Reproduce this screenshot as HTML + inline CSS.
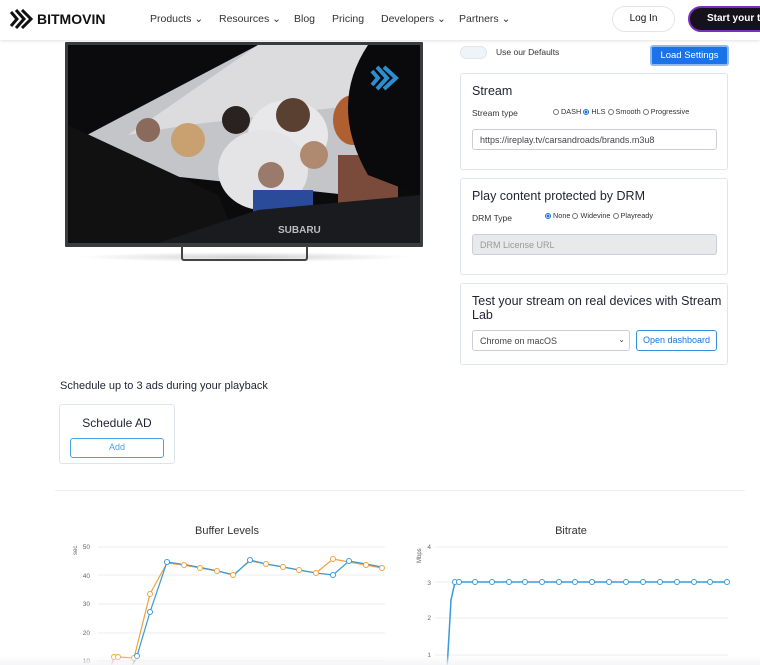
<!DOCTYPE html>
<html><head><meta charset="utf-8"><style>
*{box-sizing:border-box;margin:0;padding:0}
body{width:760px;height:665px;overflow:hidden;background:#fff;font-family:"Liberation Sans",sans-serif;color:#1f2233;position:relative}
.nav{position:absolute;top:0;left:0;width:760px;height:40px;background:#fff;box-shadow:0 1px 3px rgba(0,0,0,.12);z-index:5}
.nav span{position:absolute;top:13px;font-size:10.5px;color:#333}
.abs{position:absolute}
.card{position:absolute;border:1px solid #dfe4ec;border-radius:3px;background:#fff}
.h{position:absolute;font-size:12.5px;color:#1f2233}
.lbl{position:absolute;font-size:8.5px;color:#333}
.radio{position:absolute;font-size:7.3px;color:#333}
.radio i{display:inline-block;width:6px;height:6px;border:1px solid #777;border-radius:50%;margin-right:2px;vertical-align:-1px}
.radio i.on{border-color:#1a73e8;background:radial-gradient(#1a73e8 45%,#fff 55%)}
.inp{position:absolute;border:1px solid #ccd;border-radius:3px;font-size:9px;color:#444;padding:6px 7px}
</style></head><body>
<div class="nav">
  <svg class="abs" style="left:10px;top:9px" width="24" height="20" viewBox="0 0 24 20"><path d="M1 3l6 7-6 7M6 1l8 9-8 9M12 1l9 9-9 9" fill="none" stroke="#111" stroke-width="3"/></svg>
  <div class="abs" style="left:37px;top:11px;font-size:14px;font-weight:bold;color:#111">BITMOVIN</div>
  <span style="left:150px">Products ⌄</span><span style="left:219px">Resources ⌄</span><span style="left:294px">Blog</span><span style="left:332px">Pricing</span><span style="left:381px">Developers ⌄</span><span style="left:459px">Partners ⌄</span>
  <div class="abs" style="left:612px;top:6px;width:63px;height:26px;border:1px solid #e4e6ee;border-radius:14px;font-size:10px;text-align:center;line-height:24px;color:#111">Log In</div>
  <div class="abs" style="left:688px;top:6px;width:90px;height:26px;border:2px solid #7b2fbf;border-radius:14px;background:#15121c;color:#fff;font-size:10px;font-weight:bold;line-height:22px;padding-left:17px;white-space:nowrap">Start your tri</div>
</div>

<!-- TV -->
<div class="abs" style="left:65px;top:42px;width:358px;height:205px;background:#3a3c3e;border-radius:1px"></div>
<div class="abs" style="left:68px;top:45px;width:352px;height:198px;overflow:hidden;background:#0b0b0d">
  <svg width="352" height="198" viewBox="0 0 352 198">
    <polygon points="190,0 300,0 300,80 280,150 0,120 0,100" fill="#c3c5c8"/>
    <polygon points="190,0 300,0 290,60 120,80 60,90" fill="#dcdcde"/>
    <ellipse cx="220" cy="90" rx="40" ry="35" fill="#e8e8ea"/>
    <ellipse cx="195" cy="125" rx="45" ry="40" fill="#e4e4e6"/>
    <circle cx="168" cy="75" r="14" fill="#2a2220"/>
    <circle cx="225" cy="70" r="17" fill="#5a4030"/>
    <circle cx="120" cy="95" r="17" fill="#c9a070"/>
    <circle cx="80" cy="85" r="12" fill="#8a6a5a"/>
    <circle cx="246" cy="110" r="14" fill="#b08a70"/>
    <circle cx="203" cy="130" r="13" fill="#9a7a6a"/>
    <rect x="185" y="145" width="60" height="35" fill="#2a4a9a"/>
    <rect x="0" y="130" width="80" height="60" fill="#6a3030"/>
    <rect x="270" y="110" width="60" height="60" fill="#7a4a3a"/>
    <ellipse cx="285" cy="75" rx="20" ry="25" fill="#b06030"/>
    <polygon points="0,80 150,150 170,198 0,198" fill="#111"/>
    <polygon points="90,198 190,165 352,150 352,198" fill="#1a1b1e"/>
    <path d="M300 0 Q260 60 300 130 L352 150 L352 0Z" fill="#0a0a0c"/>
    <text x="210" y="188" fill="#bbb" font-size="10" font-weight="bold" font-family="Liberation Sans">SUBARU</text>
    <path d="M304 26l6 7-6 7M309 22l10 11-10 11M316 22l12 11-12 11" fill="none" stroke="#2a8fd0" stroke-width="4"/>
  </svg>
</div>
<div class="abs" style="left:75px;top:252px;width:340px;height:10px;border-radius:50%;background:radial-gradient(ellipse,rgba(0,0,0,.18),rgba(0,0,0,0) 70%)"></div>
<div class="abs" style="left:181px;top:246px;width:127px;height:15px;border:2px solid #444;border-top:none;border-radius:0 0 3px 3px"></div>

<!-- right panel -->
<div class="abs" style="left:460px;top:46px;width:27px;height:13px;border:1px solid #dfe6ee;border-radius:7px;background:#eef4f8"></div>
<div class="lbl" style="left:496px;top:47px">Use our Defaults</div>
<div class="abs" style="left:650px;top:45px;width:79px;height:21px;background:#1a73e8;border:2px solid #8fb8f0;border-radius:3px;color:#fff;font-size:9.5px;text-align:center;line-height:17px">Load Settings</div>

<div class="card" style="left:460px;top:73px;width:268px;height:97px"></div>
<div class="h" style="left:472px;top:84px">Stream</div>
<div class="lbl" style="left:472px;top:108px">Stream type</div>
<div class="radio" style="left:553px;top:107px"><i></i>DASH <i class="on"></i>HLS <i></i>Smooth <i></i>Progressive</div>
<div class="inp" style="left:472px;top:129px;width:245px;height:21px;padding-top:5px">https://ireplay.tv/carsandroads/brands.m3u8</div>

<div class="card" style="left:460px;top:178px;width:268px;height:97px"></div>
<div class="h" style="left:472px;top:189px">Play content protected by DRM</div>
<div class="lbl" style="left:472px;top:213px">DRM Type</div>
<div class="radio" style="left:545px;top:211px"><i class="on"></i>None <i></i>Widevine <i></i>Playready</div>
<div class="inp" style="left:472px;top:234px;width:245px;height:21px;padding-top:5px;background:#e8e9ea;color:#999">DRM License URL</div>

<div class="card" style="left:460px;top:283px;width:268px;height:82px"></div>
<div class="h" style="left:472px;top:294px;line-height:14px;width:250px">Test your stream on real devices with Stream Lab</div>
<div class="inp" style="left:472px;top:330px;width:158px;height:21px;padding-top:5px">Chrome on macOS<span style="position:absolute;right:4px;top:4px;font-size:8px">⌄</span></div>
<div class="abs" style="left:636px;top:330px;width:81px;height:21px;border:1px solid #3a8ee0;border-radius:3px;color:#1a73e8;font-size:9px;text-align:center;line-height:19px">Open dashboard</div>

<!-- ads -->
<div class="abs" style="left:60px;top:380px;font-size:11px">Schedule up to 3 ads during your playback</div>
<div class="card" style="left:59px;top:404px;width:116px;height:60px"></div>
<div class="abs" style="left:59px;top:416px;width:116px;text-align:center;font-size:12px">Schedule AD</div>
<div class="abs" style="left:70px;top:438px;width:94px;height:20px;border:1.5px solid #4aa3e0;border-radius:3px;color:#4aa3e0;font-size:9px;text-align:center;line-height:17px">Add</div>
<div class="abs" style="left:55px;top:490px;width:690px;height:1px;background:#eceef2"></div>

<!-- charts -->
<svg class="abs" style="left:0;top:515px" width="760" height="150" viewBox="0 515 760 150" font-family="Liberation Sans">
  <text x="227" y="534" font-size="11" text-anchor="middle" fill="#333">Buffer Levels</text>
  <text x="571" y="534" font-size="11" text-anchor="middle" fill="#333">Bitrate</text>
  <g stroke="#eee" stroke-width="1">
    <line x1="98" y1="547" x2="385" y2="547"/><line x1="98" y1="575" x2="385" y2="575"/><line x1="98" y1="604" x2="385" y2="604"/><line x1="98" y1="633" x2="385" y2="633"/><line x1="98" y1="661" x2="385" y2="661"/>
    <line x1="435" y1="547" x2="728" y2="547"/><line x1="435" y1="582" x2="728" y2="582"/><line x1="435" y1="618" x2="728" y2="618"/><line x1="435" y1="655" x2="728" y2="655"/>
  </g>
  <g font-size="6.5" fill="#666" text-anchor="end">
    <text x="90" y="549">50</text><text x="90" y="578">40</text><text x="90" y="606">30</text><text x="90" y="635">20</text><text x="90" y="663">10</text>
    <text x="431" y="549">4</text><text x="431" y="585">3</text><text x="431" y="620">2</text><text x="431" y="657">1</text>
  </g>
  <text transform="translate(77,555) rotate(-90)" font-size="6" fill="#666">sec</text>
  <text transform="translate(421,563) rotate(-90)" font-size="6" fill="#666">Mbps</text>
  <polyline fill="none" stroke="#f0a040" stroke-width="1.2" points="110,670 114,657 118,657 134,658 150,594 167,563 184,565 200,568 217,571 233,575 250,561 266,564 283,567 299,570 316,573 333,559 349,562 366,565 382,568"/>
  <polyline fill="none" stroke="#3a9ad8" stroke-width="1.2" points="130,670 137,656 150,612 167,562 187,565 203,568 218,571 234,575 250,560 266,564 283,567 299,570 316,573 333,575 349,561 366,564 382,567"/>
  <g fill="#fff" stroke="#f0a040" stroke-width="1"><circle cx="114" cy="657" r="2.5"/><circle cx="118" cy="657" r="2.5"/><circle cx="134" cy="658" r="2.5"/><circle cx="150" cy="594" r="2.5"/><circle cx="333" cy="559" r="2.5"/><circle cx="184" cy="565" r="2.5"/><circle cx="200" cy="568" r="2.5"/><circle cx="217" cy="571" r="2.5"/><circle cx="233" cy="575" r="2.5"/><circle cx="266" cy="564" r="2.5"/><circle cx="283" cy="567" r="2.5"/><circle cx="299" cy="570" r="2.5"/><circle cx="316" cy="573" r="2.5"/><circle cx="366" cy="565" r="2.5"/><circle cx="382" cy="568" r="2.5"/></g>
  <g fill="#fff" stroke="#3a9ad8" stroke-width="1"><circle cx="137" cy="656" r="2.5"/><circle cx="150" cy="612" r="2.5"/><circle cx="167" cy="562" r="2.5"/><circle cx="250" cy="560" r="2.5"/><circle cx="333" cy="575" r="2.5"/><circle cx="349" cy="561" r="2.5"/></g>
  <polyline fill="none" stroke="#3a9ad8" stroke-width="1.5" points="447,670 451,600 455,582 727,582"/>
  <g fill="#fff" stroke="#3a9ad8" stroke-width="1">
    <circle cx="455" cy="582" r="2.5"/><circle cx="459" cy="582" r="2.5"/><circle cx="475" cy="582" r="2.5"/><circle cx="492" cy="582" r="2.5"/><circle cx="509" cy="582" r="2.5"/><circle cx="525" cy="582" r="2.5"/><circle cx="542" cy="582" r="2.5"/><circle cx="559" cy="582" r="2.5"/><circle cx="575" cy="582" r="2.5"/><circle cx="592" cy="582" r="2.5"/><circle cx="609" cy="582" r="2.5"/><circle cx="626" cy="582" r="2.5"/><circle cx="643" cy="582" r="2.5"/><circle cx="660" cy="582" r="2.5"/><circle cx="677" cy="582" r="2.5"/><circle cx="694" cy="582" r="2.5"/><circle cx="710" cy="582" r="2.5"/><circle cx="727" cy="582" r="2.5"/>
  </g>
</svg>
<div class="abs" style="left:0;top:655px;width:760px;height:10px;background:linear-gradient(rgba(255,255,255,0),rgba(245,245,247,.9))"></div>
</body></html>
